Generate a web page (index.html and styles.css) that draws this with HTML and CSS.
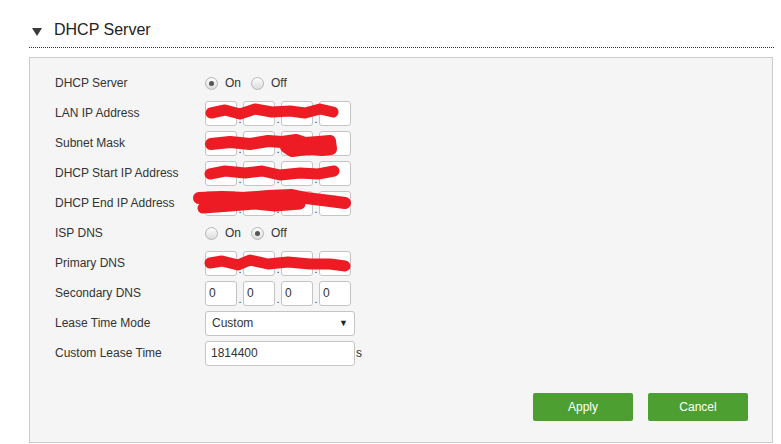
FILE: index.html
```html
<!DOCTYPE html>
<html>

<head>
  <meta charset="UTF-8">
  <link rel="stylesheet" href="styles.css">
  <title>DHCP Server</title>
</head>

<body>

<div class="section-title">
  <svg class="caret" width="10" height="8" viewBox="0 0 10 8"><polygon points="0,0 10,0 5,8" fill="#3a3a3a"/></svg>
  <span>DHCP Server</span>
</div>

<div class="panel">
  <div class="row">
    <label>DHCP Server</label>
    <div class="field">
      <span class="radio checked"></span><span class="radio-text">On</span>
      <span class="radio"></span><span class="radio-text">Off</span>
    </div>
  </div>
  <div class="row">
    <label>LAN IP Address</label>
    <div class="field ip"><input><i>.</i><input><i>.</i><input><i>.</i><input></div>
  </div>
  <div class="row">
    <label>Subnet Mask</label>
    <div class="field ip"><input><i>.</i><input><i>.</i><input><i>.</i><input></div>
  </div>
  <div class="row">
    <label>DHCP Start IP Address</label>
    <div class="field ip"><input><i>.</i><input><i>.</i><input><i>.</i><input></div>
  </div>
  <div class="row">
    <label>DHCP End IP Address</label>
    <div class="field ip"><input><i>.</i><input><i>.</i><input><i>.</i><input></div>
  </div>
  <div class="row">
    <label>ISP DNS</label>
    <div class="field">
      <span class="radio"></span><span class="radio-text">On</span>
      <span class="radio checked"></span><span class="radio-text">Off</span>
    </div>
  </div>
  <div class="row">
    <label>Primary DNS</label>
    <div class="field ip"><input><i>.</i><input><i>.</i><input><i>.</i><input></div>
  </div>
  <div class="row">
    <label>Secondary DNS</label>
    <div class="field ip"><input value="0"><i>.</i><input value="0"><i>.</i><input value="0"><i>.</i><input value="0"></div>
  </div>
  <div class="row">
    <label>Lease Time Mode</label>
    <div class="field">
      <div class="select"><span>Custom</span><span class="arrow">&#9660;</span></div>
    </div>
  </div>
  <div class="row">
    <label>Custom Lease Time</label>
    <div class="field">
      <input class="wide" value="1814400"><span class="unit">s</span>
    </div>
  </div>

  <div class="actions">
    <button class="btn">Apply</button>
    <button class="btn">Cancel</button>
  </div>

  <!-- redaction marks over the addresses -->
  <svg class="scribble" width="744" height="386" viewBox="29 57 744 386">
    <g fill="none" stroke="#ed1c24" stroke-linecap="round" stroke-linejoin="round">
      <polyline stroke-width="11" points="211,113 225,110 240,114 255,109 272,112 290,111 305,113 320,109 333,112"/>
      <polyline stroke-width="12" points="211,144 230,142 250,144 268,141 282,142 296,140 305,143 318,142 330,141 331,149 322,150 308,149 292,151 286,147"/>
      <polyline stroke-width="11" points="210,174 225,171 245,173 262,171 280,175 300,173 318,174 334,171"/>
      <polyline stroke-width="12" points="199,198 222,197 246,198 268,196 292,195 306,198 330,201 345,203"/>
      <polyline stroke-width="11" points="203,208 230,206 255,204 275,206 300,204"/>
      <polyline stroke-width="11" points="210,263 222,261 238,265 250,260 268,264 288,262 310,264 330,264 345,266"/>
    </g>
  </svg>
</div>

</body>
</html>
```

FILE: styles.css
```css
body {
    font-family: "Liberation Sans", Arial, sans-serif;
    color: #333;
    background-color: #fff;
    margin: 0;
    padding: 0;
}

.section-title {
    display: flex;
    align-items: center;
    gap: 12px;
    height: 30px;
    margin: 15px 7px 0 29px;
    padding-left: 3px;
    border-bottom: 1px dotted #333;
    padding-bottom: 2px;
    font-size: 16px;
    color: #222;
}

.caret {
    margin-top: 3px;
}

.panel {
    position: relative;
    margin: 9px 8px 0 29px;
    border: 1px solid #ccc;
    background: #f5f5f5;
    padding: 10px 24px 20px 25px;
    height: 354px;
}

.row {
    display: flex;
    align-items: center;
    height: 30px;
    font-size: 12px;
}

.row label {
    width: 150px;
}

.field {
    display: flex;
    align-items: center;
}

.radio {
    display: inline-block;
    width: 11px;
    height: 11px;
    border: 1px solid #b5b5b5;
    border-radius: 50%;
    background: linear-gradient(#fdfdfd, #dcdcdc);
    position: relative;
}

.radio.checked::after {
    content: "";
    position: absolute;
    left: 3px;
    top: 3px;
    width: 5px;
    height: 5px;
    border-radius: 50%;
    background: #555;
}

.radio-text {
    margin: 0 10px 0 7px;
}

input {
    font-family: "Liberation Sans", Arial, sans-serif;
    font-size: 12px;
    color: #333;
    box-sizing: border-box;
    height: 25px;
    border: 1px solid #c4c4c4;
    border-radius: 3px;
    background: #fff;
    padding: 0 3px;
    outline: none;
    margin: 0;
}

.ip input {
    width: 32px;
}

.ip i {
    font-style: normal;
    width: 6px;
    text-align: center;
    align-self: flex-end;
    line-height: 14px;
    font-size: 11px;
}

.select {
    box-sizing: border-box;
    width: 150px;
    height: 25px;
    border: 1px solid #c4c4c4;
    border-radius: 3px;
    background: #fff;
    display: flex;
    align-items: center;
    justify-content: space-between;
    padding: 0 6px 0 6px;
}

.select .arrow {
    font-size: 9px;
    color: #222;
}

input.wide {
    width: 150px;
    padding: 0 5px;
}

.unit {
    margin-left: 1px;
}

.actions {
    display: flex;
    justify-content: flex-end;
    gap: 15px;
    margin-top: 25px;
}

.btn {
    width: 100px;
    height: 28px;
    border: none;
    border-radius: 2px;
    background-color: #4e9f31;
    color: #fff;
    font-family: "Liberation Sans", Arial, sans-serif;
    font-size: 12px;
    cursor: pointer;
}

.scribble {
    position: absolute;
    left: -1px;
    top: -1px;
    pointer-events: none;
}
```
